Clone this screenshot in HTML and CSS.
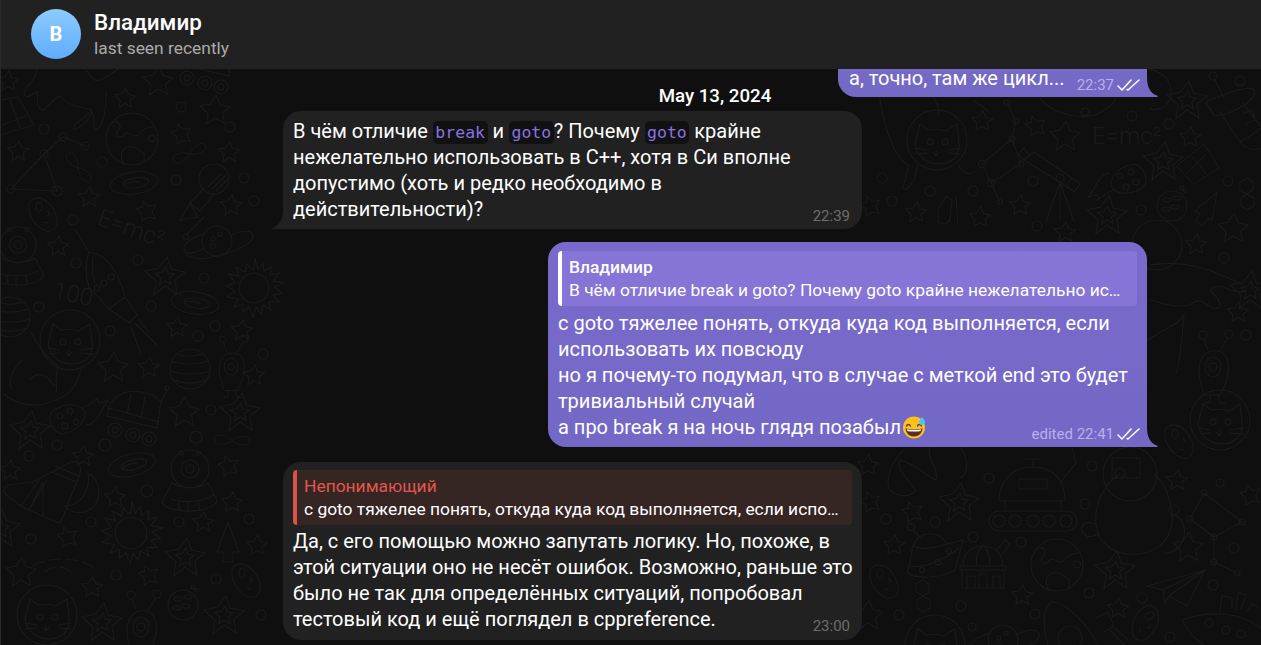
FILE: index.html
```html
<!DOCTYPE html>
<html>
<head>
    <title>Владимир</title>
    <link rel="stylesheet" href="styles.css">
</head>
<body>
    <svg class="icon-defs" width="0" height="0">
        <defs>
            <symbol id="checks" viewBox="0 0 24 14">
                <path d="M1 8l4 4L14 2M10 11.500l1 .5L22 2" fill="none" stroke="currentColor" stroke-width="1.500" stroke-linecap="round" stroke-linejoin="round"/>
            </symbol>

            <path id="d-star" d="M1-10 3.500-3.500 10.500-2 5 2 6.500 9 0 5.500-6 9.500-5 2.500-10.500-3-3.500-4Z"/>
            <path id="d-star-b" d="M-3-10 2-4.500 9.500-6 6 .5 9 7.500 2 6-4 10-4 3-10-2-3.500-4Z"/>
            <path id="d-star-m" d="M1-15 5-5.500 15-3 7.500 3 9.500 13.500 0 8-8.500 14-7 3.500-15-4-5-6Z"/>
            <g id="d-star2">
                <path d="M2-19 6.500-7 20-4 10 4 12 18 0 10-11 19-9 5-20-5-6.500-8Z"/>
                <path d="M1-9 3-3 9-2 4.500 2 6 8.500 0 5-5.500 9-4 2-9.500-2.500-3-3.500Z"/>
            </g>
            <g id="d-earth">
                <circle r="26"/>
                <path d="M-22-14C-16-22-8-14-14-8-20-2-10 0-8-4-4-10 0 0 6-4 10-10 16-12 22-12M-8 26C-12 18-12 10-4 8 4 6 6 12 12 14L12 24M20-4A3.500 3.500 0 1 0 20.100-4"/>
            </g>
            <g id="d-saturn">
                <circle r="15"/>
                <path d="M-13 7C-28 16-36 12-32 4-30 0-22-4-14-7M14-6C24-10 34-12 36-6 38 2 18 10 4 14-10 18-26 20-32 12"/>
                <circle cx="-4" cy="-2" r="2"/><circle cx="3" cy="-7" r="2"/><circle cx="-4" cy="5" r="2.500"/>
            </g>
            <g id="d-galaxy">
                <ellipse rx="24" ry="11"/>
                <ellipse cx="2" rx="13" ry="5"/>
                <path d="M-10 1C-6-2 2-2 6 0"/>
            </g>
            <path id="d-infinity" d="M0 0C-8-9-22-10-22-2-22 6-9 5 0 0 8-7 22-8 22 0 22 7 8 6 0 0Z"/>
            <g id="d-sun">
                <circle r="15"/>
                <path d="M0-19 1-30 4-19 9-25 10-17 17-21 16-13 25-15 19-7 30-5 20-1 28 5 19 7 25 14 15 14 17 22 9 17 7 26 2 19-1 29-5 19-11 24-11 16-20 19-16 11-27 9-19 3-28-2-19-5-25-14-15-12-18-21-9-16-7-24-3-19Z"/>
            </g>
            <g id="d-rover">
                <path d="M-26-16C-16-36 14-34 26-20L22 6-28-6Z"/>
                <path d="M-26-14 24 0M-4-28-8-8M10-26 6-4M26-20 32-32"/>
                <circle cx="32" cy="-34" r="2"/>
                <circle cx="-20" cy="8" r="7"/><circle cx="-2" cy="13" r="7"/><circle cx="14" cy="17" r="7"/>
                <circle cx="-20" cy="8" r="3"/><circle cx="-2" cy="13" r="3"/><circle cx="14" cy="17" r="3"/>
            </g>
            <g id="d-comet">
                <path d="M-12 14C-24 10-28-4-20-10-8-18 4-16 10-10 14-2 4 12-12 14Z"/>
                <circle cx="-14" cy="-4" r="3"/><circle cx="-4" cy="-9" r="3"/><circle cx="-9" cy="6" r="3"/><circle cx="2" cy="2" r="2.500"/>
                <path d="M8-12C16-14 18-18 24-22 22-16 28-16 34-20 30-12 24-6 26-6 20 2 16 6 12 4"/>
            </g>
            <g id="d-telescope">
                <path d="M-36-18-26-26 12 0 6 8ZM12 0 20 6 14 14 6 8M-30-22-36-30-42-24-36-18"/>
                <circle r="4"/>
                <path d="M0 4-14 44M0 4 0 44M0 4 14 44"/>
            </g>
            <g id="d-flashlight">
                <circle cx="14" cy="-12" r="15"/>
                <path d="M4-3-10 12 0 20 14 3M-10 12-20 30M-10 12-2 26-16 28-20 30M4 26-14 44"/>
                <path d="M8-4 22-18M12-2 26-16M16 0 28-12"/>
                <circle cx="-14" cy="46" r="3"/>
            </g>
            <path id="d-moon" d="M6-21C22-12 20 14 2 18-6 20-13 17-17 12-4 12 9 0 6-21Z"/>
            <g id="d-shuttle">
                <path d="M38-30C46-32 50-24 46-16L28 30C24 32 14 26 10 24L-4 18-12 14-28 2C-32-4-26-8-16-8L0-10Z"/>
                <path d="M6-12-12 14M14-12-4 18 10-10 10 24M18-20 44-10M22-26 46-16"/>
            </g>
            <g id="d-ufo">
                <circle cy="-18" r="19"/><circle cy="-18" r="9"/><circle cy="-18" r="4"/>
                <circle cx="-9" cy="-34" r="2"/><circle cx="9" cy="-34" r="2"/>
                <path d="M-18-4C-8 2 8 2 18-4L24 8C30 14 26 18 16 22 2 26-20 24-26 18-30 14-24 8-18-4ZM-20 12C-8 16 10 16 24 8M-12 14-10 24M-2 15-2 26M8 14 10 24"/>
            </g>
            <g id="d-saucer">
                <path d="M-26 20C-18 28 8 26 22 18L30-12 14-8C6-22-14-22-20-6-22 2-22 10-26 20Z"/>
                <path d="M-24 14C-10 16 8 10 26-4M-20-6C-12-2 2-4 14-8"/>
                <circle cx="-11" cy="18" r="2.500"/><circle cx="5" cy="10" r="3"/><circle cx="16" cy="-1" r="2.500"/>
                <path d="M-14-16-20-22"/><circle cx="-22" cy="-25" r="3.500"/>
            </g>
            <g id="d-alien">
                <path d="M-2-14C-16-12-16 6-14 14-12 24-10 30-8 30H6C8 26 14 16 14 6 16-6 10-16-2-14ZM-6-15-10-26M6-15 14-27"/>
                <circle cx="-11" cy="-30" r="4"/><circle cx="15" cy="-31" r="4"/>
                <ellipse cx="-1" cy="2" rx="8" ry="10"/><circle cx="-1" cy="2" r="4"/>
                <path d="M-4 30-4 37-10 38M4 30 6 38 12 38"/>
            </g>
            <g id="d-rocket">
                <path d="M-16-22C-2-24 14-4 20 22L4 34-16 12C-20 0-20-14-16-22Z"/>
                <path d="M4 34 24 48 32 40 20 22M-12-18C-14-6-12 2-10 8M-16-22-30-46"/>
                <circle cx="6" cy="2" r="3"/><circle cx="-1" cy="8" r="3"/><circle cx="-8" cy="13" r="3"/>
                <path d="M30 48 52 70M26 52 36 80M34 44 44 58"/>
            </g>
            <g id="d-egg">
                <path d="M-11-14C-2-18 8-10 12 2 16 12 10 20 2 18-8 14-16 4-15-8-15-12-13-13-11-14Z"/>
                <ellipse cx="-5" cy="-6" rx="3" ry="5"/><path d="M3-2 6 1 3 3M0 9 4 10"/>
            </g>
            <path id="d-arrow" d="M0-20 11 10H5V20H-5V10H-11Z"/>
            <g id="d-cat">
                <circle r="30"/>
                <path d="M-17-16-22 4C-20 18-8 24 2 24 14 24 24 16 22 2L20-16 9-9C3-11-4-11-9-10ZM-4 12-1 16 2 12M-1 10-1 16M-22 8-10 10M-22 14-10 13M10 10 24 8M10 13 24 14"/>
                <circle cx="-7" cy="2" r="3"/><circle cx="8" cy="2" r="3"/>
            </g>
            <path id="d-cat-body" d="M-10 0C-26 10-36 30-34 50-32 72-12 82 8 80 32 78 44 60 42 40 40 20 32 6 24 0M-34 50C-46 46-52 52-46 60-40 66-32 60-32 60M42 40C54 44 60 60 48 74 42 80 34 80 34 78"/>
            <g id="d-planet-ring">
                <circle r="20"/>
                <path d="M-19-8C-8-4 8-4 19-8M-20 2C-8 6 8 6 20 2M-17 11C-6 15 6 15 17 11M-12-15C-4-12 4-12 12-15"/>
            </g>
            <g id="d-planet-spots">
                <circle r="15"/>
                <ellipse cx="-5" cy="-6" rx="4" ry="2"/><ellipse cx="5" cy="-8" rx="4" ry="2"/>
                <ellipse cx="-6" cy="3" rx="4" ry="2"/><ellipse cx="3" cy="1" rx="4" ry="2"/>
                <circle cx="10" cy="-18" r="2"/><circle cx="13" cy="-15" r="1.500"/>
            </g>
            <g id="d-tank">
                <path d="M-34 8C-34-12-20-26 0-26 20-26 32-14 32 8ZM-28 8V18M28 8V18M-14-14H14V-4H-14ZM0-26V-34M-8-34H8"/>
                <rect x="-44" y="18" width="88" height="20" rx="10"/>
                <circle cx="-34" cy="28" r="6"/><circle cx="-18" cy="28" r="6"/><circle cx="0" cy="28" r="6"/><circle cx="16" cy="28" r="6"/><circle cx="33" cy="28" r="6"/>
            </g>
            <g id="d-observatory">
                <path d="M-20 0C-20-14-10-20 0-20 10-20 20-14 20 0M-23 0H23V4H-23ZM-6 0C-8-10-4-18 0-20 4-18 8-10 6 0M14-16 22-26 27-22 19-12"/>
                <path d="M-21 4V22H21V4M-16 22V10H-8V22M-4 22V8H4V22M10 22V10H17V22"/>
            </g>
            <g id="d-plane">
                <path d="M-30-2 28-18 10 18-8 8-12 16-14 2ZM-14 2 28-18-8 8"/>
            </g>
            <g id="d-hex">
                <path d="M-7-14 0-18 6-14 6-6 0-2-7-6ZM-6 2 0-2 7 2 7 10 0 14-6 10Z"/>
            </g>
            <g id="d-kite">
                <path d="M-15-24-32 20 0 30 18-6ZM-22-2 8 10M-6-14-16 24"/>
            </g>
            <g id="d-dish">
                <path d="M-26-18C-6-26 16-36 22-30 26-22 4-6-18-4Z"/>
                <path d="M-26-18-18-4M-12-8 8 22 30 8 10-18M8 22C14 30 24 32 32 26L30 8M14 4 24 0 20-10 10-6"/>
                <path d="M-8-22-18-42"/><circle cx="-19" cy="-44" r="4"/>
            </g>
        </defs>
    </svg>

    <header class="topbar">
        <div class="avatar">В</div>
        <div class="peer">
            <div class="peer-name">Владимир</div>
            <div class="peer-status">last seen recently</div>
        </div>
    </header>

    <main class="chat">
        <!-- wallpaper doodles, drawn on their own canvas behind the messages -->
        <svg class="wallpaper" width="1261" height="576" viewBox="0 69 1261 576" fill="none" stroke="#1b1b1b" stroke-width="1.100" aria-hidden="true">
            <!-- left column -->
            <use href="#d-star" x="8" y="81"/>
            <use href="#d-star" x="125" y="98"/>
            <use href="#d-star-m" x="158" y="81"/>
            <use href="#d-rover" x="207" y="70"/>
            <use href="#d-star-m" x="215" y="110"/>
            <path d="M37 69C35 85 23 86 24 94 26 100 32 94 37 92 38 100 36 110 44 110 48 106 52 100 60 96M85 69C92 76 92 82 100 80 108 76 112 74 118 69M60 96C68 106 84 108 92 110 84 120 70 124 74 130 84 126 90 118 92 112 96 120 92 130 96 130 104 126 106 110 106 92"/>
            <path d="M0 100 18 97 34 125 0 135ZM2 125 26 116M10 100 20 128"/>
            <path d="M85 146 63 137 44 154 11 189 57 191 44 154"/>
            <circle cx="63" cy="137" r="4"/><circle cx="85" cy="146" r="4"/><circle cx="44" cy="154" r="4"/><circle cx="11" cy="189" r="4"/><circle cx="57" cy="191" r="5"/>
            <use href="#d-earth" x="132" y="139"/>
            <use href="#d-star" x="18" y="151"/>
            <use href="#d-star-b" x="181" y="134"/>
            <use href="#d-infinity" transform="translate(190 154) rotate(-28) scale(.8)"/>
            <use href="#d-star" x="229" y="152"/>
            <use href="#d-infinity" transform="translate(78 168) rotate(48) scale(.8)"/>
            <use href="#d-galaxy" transform="translate(134 183) rotate(-8)"/>
            <use href="#d-flashlight" x="200" y="191"/>
            <use href="#d-star" x="89" y="197"/>
            <use href="#d-star-b" x="146" y="211"/>
            <use href="#d-star" x="231" y="205"/>
            <use href="#d-egg" x="44" y="213"/>
            <text class="doodle-text" transform="translate(96 224) rotate(20)">E=mc²</text>
            <use href="#d-ufo" transform="translate(18 262) scale(.95)"/>
            <use href="#d-star" x="58" y="246"/>
            <use href="#d-saturn" x="217" y="241"/>
            <use href="#d-rocket" x="105" y="275"/>
            <use href="#d-star2" x="165" y="276"/>
            <use href="#d-sun" x="254" y="288"/>
            <text class="doodle-text" transform="translate(52 298) rotate(12)">100</text>
            <use href="#d-galaxy" transform="translate(195 303) rotate(8)"/>
            <use href="#d-planet-ring" x="10" y="317"/>
            <use href="#d-cat" x="70" y="340"/>
            <path d="M30 331C38 345 44 355 58 366 54 380 58 390 56 392M82 366C78 390 64 400 40 405 20 406 12 400 4 394M22 360C12 370 8 380 12 390M30 380C36 372 46 372 54 386"/>
            <use href="#d-star" x="177" y="327"/>
            <use href="#d-star" x="242" y="330"/>
            <use href="#d-star-m" x="113" y="367"/>
            <use href="#d-star" x="149" y="367"/>
            <use href="#d-planet-ring" x="190" y="369"/>
            <use href="#d-alien" transform="translate(232 365) scale(.85)"/>
            <use href="#d-star" x="254" y="375"/>
            <use href="#d-star2" x="30" y="430"/>
            <use href="#d-comet" x="74" y="420"/>
            <use href="#d-rover" x="135" y="422"/>
            <use href="#d-star-m" x="184" y="412"/>
            <use href="#d-star2" x="240" y="412"/>
            <use href="#d-infinity" transform="translate(232 441) scale(.8)"/>
            <use href="#d-star" x="83" y="456"/>
            <use href="#d-star" x="10" y="470"/>
            <use href="#d-galaxy" transform="translate(132 465) rotate(-14)"/>
            <use href="#d-star-b" x="228" y="466"/>
            <use href="#d-ufo" x="190" y="487"/>
            <use href="#d-shuttle" x="33" y="492"/>
            <use href="#d-moon" x="82" y="494"/>
            <use href="#d-star" x="115" y="497"/>
            <use href="#d-star" x="232" y="502"/>
            <use href="#d-sun" transform="translate(131 533) scale(1.050)"/>
            <use href="#d-star" x="203" y="522"/>
            <use href="#d-star-b" x="67" y="537"/>
            <use href="#d-star2" x="0" y="528"/>
            <use href="#d-arrow" x="228" y="542"/>
            <use href="#d-star" x="257" y="545"/>
            <use href="#d-star2" x="185" y="557"/>
            <use href="#d-star-m" x="21" y="572"/>
            <path d="M32 566C50 556 80 556 98 570M44 572C56 564 66 566 74 575" stroke-dasharray="14 3"/>
            <use href="#d-star-b" x="148" y="575"/>
            <use href="#d-star" x="92" y="587"/>
            <use href="#d-egg" x="247" y="579"/>
            <use href="#d-planet-spots" x="183" y="605"/>
            <use href="#d-cat" x="47" y="615"/>
            <use href="#d-star2" x="102" y="622"/>
            <use href="#d-alien" x="142" y="625"/>
            <use href="#d-star2" x="224" y="615"/>

            <!-- right column -->
            <path d="M1148 69C1166 72 1174 84 1170 100 1166 108 1154 112 1150 108"/>
            <use href="#d-star2" x="1187" y="100"/>
            <use href="#d-dish" x="1232" y="120"/>
            <use href="#d-star" x="1190" y="137"/>
            <use href="#d-kite" transform="translate(1205 165) rotate(30) scale(.75)"/>
            <use href="#d-star2" x="1163" y="161"/>
            <use href="#d-hex" x="1247" y="196"/>
            <use href="#d-planet-spots" x="1172" y="206"/>
            <use href="#d-arrow" transform="translate(1208 208) rotate(30) scale(.9)"/>
            <use href="#d-star-m" x="1233" y="228"/>
            <use href="#d-star" x="1196" y="244"/>
            <circle cx="1157" cy="245" r="25"/>
            <path d="M1150 265C1180 260 1208 268 1228 278 1250 286 1252 296 1230 290 1222 286 1216 284 1210 290 1220 300 1226 310 1212 308 1205 304 1200 296 1190 305 1170 308 1160 302 1150 300"/>
            <use href="#d-star" x="1238" y="312"/>
            <use href="#d-alien" x="1214" y="365"/>
            <path d="M1148 340C1170 325 1178 325 1184 315 1182 340 1180 360 1176 375"/>
            <use href="#d-cat" x="1220" y="420"/>
            <use href="#d-star2" x="1250" y="290"/>
            <use href="#d-egg" x="1180" y="440"/>
            <use href="#d-star" x="868" y="465"/>
            <path d="M903 450C890 465 885 480 890 490 900 500 915 495 915 490 910 480 895 470 900 460 912 462 925 475 936 480 940 470 925 455 930 447M960 447C970 460 968 475 960 478"/>
            <use href="#d-star-b" x="870" y="502"/>
            <use href="#d-star-b" x="912" y="512"/>
            <use href="#d-star2" x="959" y="502"/>
            <use href="#d-tank" x="1033" y="493"/>
            <path d="M1072 448 1076 463 1060 483"/>
            <use href="#d-cat-body" x="1130" y="474"/>
            <circle cx="1130" cy="474" r="27"/>
            <path d="M1112 458H1140V478H1112ZM1120 468A5 5 0 1 0 1120.100 468"/>
            <use href="#d-star" x="1177" y="480"/>
            <use href="#d-star-b" x="1250" y="495"/>
            <path d="M1204 493 1242 522 1214 537 1190 519ZM1214 537V562L1237 573"/>
            <circle cx="1204" cy="493" r="3"/><circle cx="1242" cy="522" r="3"/><circle cx="1214" cy="537" r="3"/><circle cx="1190" cy="519" r="3"/><circle cx="1214" cy="562" r="3"/><circle cx="1237" cy="573" r="3"/>
            <use href="#d-star" x="894" y="545"/>
            <use href="#d-saucer" x="933" y="552"/>
            <use href="#d-observatory" x="983" y="566"/>
            <use href="#d-earth" x="1057" y="565"/>
            <use href="#d-star2" x="1115" y="570"/>
            <use href="#d-star-m" x="1188" y="547"/>
            <use href="#d-plane" x="1177" y="588"/>
            <use href="#d-egg" x="885" y="580"/>
            <use href="#d-hex" x="923" y="598"/>
            <use href="#d-star" x="1022" y="595"/>
            <use href="#d-star" x="1118" y="608"/>
            <use href="#d-star-m" x="868" y="615"/>
            <path d="M1048 645C1040 620 1046 600 1054 602 1070 606 1088 625 1098 645M1096 618 1108 612 1114 626 1104 632M1110 630 1124 645M1115 628 1128 640"/>
            <circle cx="1070" cy="638" r="12"/>
            <use href="#d-egg" transform="translate(1147 623) rotate(60)"/>
            <path d="M1182 620C1210 610 1240 612 1261 628M1182 620C1190 635 1196 640 1204 645M1220 612 1222 596 1232 598 1232 608M1236 610 1238 592 1246 595 1240 610M1246 612 1252 604 1258 608"/>
            <circle cx="1209" cy="623" r="4"/><circle cx="1226" cy="630" r="4"/><circle cx="1241" cy="634" r="4"/>
            <use href="#d-cat" x="935" y="645"/>
            <use href="#d-saturn" x="1003" y="640"/>

            <!-- top middle, above the purple bubble -->
            <use href="#d-cat" x="937" y="140"/>
            <path d="M880 69C875 100 890 155 908 165 908 180 898 190 906 190 918 180 915 170 918 165M958 165C965 175 970 175 975 172M932 95C935 100 940 105 938 115M973 100C980 105 985 108 988 112"/>
            <path d="M1007 103 1016 121 1012 139 982 164 991 183 1021 164 1012 139M991 183 1000 202"/>
            <circle cx="1007" cy="103" r="3"/><circle cx="1016" cy="121" r="3"/><circle cx="1012" cy="139" r="3"/><circle cx="982" cy="164" r="3.500"/><circle cx="1021" cy="164" r="3"/><circle cx="991" cy="183" r="3.500"/><circle cx="1000" cy="202" r="2.500"/>
            <use href="#d-star" x="982" y="121"/>
            <use href="#d-star-b" x="1035" y="126"/>
            <use href="#d-star-m" x="1065" y="136"/>
            <text class="doodle-text" x="1092" y="144">E=mc²</text>
            <use href="#d-telescope" x="1060" y="178"/>
            <use href="#d-comet" transform="translate(1122 178) rotate(180)"/>
            <path d="M1040 98C1050 112 1075 120 1095 115 1110 108 1115 102 1115 98M1085 108A4 4 0 1 0 1085.100 108"/>
            <use href="#d-star-b" x="870" y="206"/>
            <use href="#d-star" x="916" y="212"/>
            <path d="M938 210 946 196 952 200 950 220 946 224 938 222ZM956 196 958 225"/>
            <use href="#d-star" x="980" y="217"/>
            <use href="#d-star" x="1020" y="205"/>
            <use href="#d-star2" x="1107" y="215"/>
            <use href="#d-star" x="1065" y="232"/>

            <g fill="none">
                <circle cx="181" cy="107" r="5"/><circle cx="230" cy="127" r="5"/><circle cx="44" cy="129" r="5"/>
                <circle cx="102" cy="162" r="5"/><circle cx="176" cy="180" r="5"/><circle cx="244" cy="178" r="5"/>
                <circle cx="254" cy="201" r="5"/><circle cx="73" cy="220" r="5"/><circle cx="76" cy="263" r="5"/>
                <circle cx="138" cy="260" r="5"/><circle cx="204" cy="278" r="5"/><circle cx="39" cy="307" r="5"/>
                <circle cx="151" cy="306" r="5"/><circle cx="215" cy="326" r="5"/><circle cx="198" cy="336" r="5"/>
                <circle cx="110" cy="331" r="5"/><circle cx="263" cy="354" r="5"/>
                <circle cx="211" cy="410" r="5"/><circle cx="57" cy="445" r="5"/><circle cx="105" cy="445" r="6"/>
                <circle cx="29" cy="456" r="5"/><circle cx="196" cy="437" r="6"/><circle cx="147" cy="491" r="6"/>
                <circle cx="91" cy="522" r="5"/><circle cx="179" cy="522" r="5"/><circle cx="249" cy="519" r="5"/>
                <circle cx="31" cy="539" r="5"/><circle cx="116" cy="575" r="5"/><circle cx="216" cy="579" r="5"/>
                <circle cx="261" cy="615" r="5"/>
                <circle cx="1240" cy="81" r="5"/><circle cx="1169" cy="124" r="5"/><circle cx="1228" cy="181" r="5"/>
                <circle cx="1224" cy="258" r="5"/><circle cx="1246" cy="335" r="5"/><circle cx="1132" cy="116" r="5"/>
                <circle cx="882" cy="178" r="5"/><circle cx="930" cy="191" r="5"/><circle cx="973" cy="191" r="5"/>
                <circle cx="892" cy="201" r="5"/><circle cx="1033" cy="181" r="5"/><circle cx="1141" cy="210" r="5"/>
                <circle cx="1037" cy="226" r="5"/><circle cx="989" cy="478" r="5"/><circle cx="886" cy="519" r="5"/>
                <circle cx="935" cy="522" r="5"/><circle cx="973" cy="537" r="5"/><circle cx="1021" cy="542" r="5"/>
                <circle cx="1085" cy="504" r="5"/><circle cx="1092" cy="466" r="5"/><circle cx="1174" cy="510" r="5"/>
                <circle cx="1220" cy="483" r="4"/><circle cx="1234" cy="548" r="5"/><circle cx="1213" cy="585" r="5"/>
                <circle cx="1089" cy="593" r="5"/><circle cx="1142" cy="598" r="5"/><circle cx="1170" cy="637" r="5"/>
                <circle cx="1035" cy="614" r="5"/><circle cx="961" cy="606" r="5"/><circle cx="899" cy="615" r="5"/>
                <circle cx="972" cy="627" r="4"/>
            </g>
        </svg>

        <div class="messages">
            <div class="bubble out first-row">
                <div class="text">а, точно, там же цикл...<span class="meta"><span>22:37</span><svg class="checks"><use href="#checks"/></svg></span></div>
                <svg class="tail tail-out" width="11" height="20" viewBox="0 0 11 20"><path d="M0 0C0 10 3 16 10 18.500 11 19 11 20 10 20H0Z"/></svg>
            </div>

            <div class="date">May 13, 2024</div>

            <div class="bubble in wide">
                <div class="text">В чём отличие <code>break</code> и <code>goto</code>? Почему <code>goto</code> крайне нежелательно использовать в C++, хотя в Си вполне допустимо (хоть и редко необходимо в действительности)?<span class="meta"><span>22:39</span></span></div>
                <svg class="tail tail-in" width="11" height="20" viewBox="0 0 11 20"><path d="M11 0C11 10 8 16 1 18.500 0 19 0 20 1 20H11Z"/></svg>
            </div>

            <div class="bubble out big">
                <div class="reply">
                    <div class="reply-name">Владимир</div>
                    <div class="reply-text">В чём отличие break и goto? Почему goto крайне нежелательно использовать в C++, хотя в Си</div>
                </div>
                <div class="text">с goto тяжелее понять, откуда куда код выполняется, если использовать их повсюду<br>но я почему-то подумал, что в случае с меткой end это будет тривиальный случай<br>а про break я на ночь глядя позабыл<svg class="emoji" width="24" height="24" viewBox="0 0 24 24">
                    <circle cx="12" cy="12.500" r="11" fill="#fcc21b"/>
                    <path d="M4.500 11c.5-2 3-2 4 0M15.500 11c.5-2 3-2 4 0" fill="none" stroke="#5d4037" stroke-width="1.400" stroke-linecap="round"/>
                    <path d="M3.500 13.500c3 1 14 1 17 0-.5 5-4 8-8.500 8s-8-3-8.500-8Z" fill="#5d2f1e"/>
                    <path d="M5 14.200c3 .7 11 .7 14 0l-.3 1.800c-3 .7-10.400.7-13.400 0Z" fill="#fff"/>
                    <path d="M20 2c1.500 2 3 3.500 3 5a3 3 0 0 1-6 0c0-1.500 1.500-3 3-5Z" fill="#4fc3f7"/>
                </svg><span class="meta"><span>edited 22:41</span><svg class="checks"><use href="#checks"/></svg></span></div>
                <svg class="tail tail-out" width="11" height="20" viewBox="0 0 11 20"><path d="M0 0C0 10 3 16 10 18.500 11 19 11 20 10 20H0Z"/></svg>
            </div>

            <div class="bubble in wide last">
                <div class="reply reply-red">
                    <div class="reply-name">Непонимающий</div>
                    <div class="reply-text">с goto тяжелее понять, откуда куда код выполняется, если использовать их повсюду но я</div>
                </div>
                <div class="text">Да, с его помощью можно запутать логику. Но, похоже, в этой ситуации оно не несёт ошибок. Возможно, раньше это было не так для определённых ситуаций, попробовал тестовый код и ещё поглядел в cppreference.<span class="meta"><span>23:00</span></span></div>
            </div>
        </div>
    </main>
</body>
</html>
```
FILE: styles.css
```css
html, body {
    margin: 0;
    padding: 0;
    height: 100%;
    overflow: hidden;
}
body {
    display: flex;
    flex-direction: column;
    background-color: #0f0f0f;
    color: #fff;
    font-family: Roboto, "Noto Sans", sans-serif;
    border-left: 1px solid #2a2a2a;
    box-sizing: border-box;
}
.icon-defs {
    position: absolute;
}

/* Top bar */
.topbar {
    flex: none;
    height: 69px;
    box-sizing: border-box;
    padding-left: 30px;
    display: flex;
    align-items: center;
    gap: 13px;
    background-color: #212121;
}
.avatar {
    width: 50px;
    height: 50px;
    margin-top: -1px;
    border-radius: 50%;
    background: linear-gradient(#8ccbff, #5eadff);
    display: flex;
    align-items: center;
    justify-content: center;
    font-size: 20px;
    font-weight: 700;
}
.peer {
    margin-top: 1px;
}
.peer-name {
    font-size: 22.4px;
    font-weight: 500;
    line-height: 25px;
}
.peer-status {
    font-size: 17.4px;
    line-height: 25px;
    margin-top: 1px;
    color: #aaa;
}

/* Message column */
.chat {
    flex: 1;
    min-height: 0;
    position: relative;
    overflow: hidden;
    display: flex;
    flex-direction: column;
    justify-content: flex-end;
}
.wallpaper {
    position: absolute;
    left: -1px;
    top: 0;
}
.doodle-text {
    fill: #1b1b1b;
    stroke: none;
    font-size: 24px;
    font-weight: 300;
}
.messages {
    position: relative;
    width: 864px;
    margin-left: 282px;
    padding-bottom: 5px;
    display: flex;
    flex-direction: column;
    flex: none;
}
.date {
    text-align: center;
    font-size: 18.7px;
    font-weight: 500;
    line-height: 18px;
    height: 24px;
    margin-top: -10px;
}

.bubble {
    position: relative;
    box-sizing: border-box;
    border-radius: 18px;
    padding: 7px 10px;
    font-size: 20px;
    line-height: 26px;
}
.bubble.in {
    align-self: flex-start;
    background-color: #212121;
    border-bottom-left-radius: 0;
}
/* Incoming text runs a little wider than its quote box. */
.bubble.in .text {
    margin-right: -2px;
}
.bubble.out {
    align-self: flex-end;
    background: linear-gradient(#7a6acb, #7368c6);
    border-bottom-right-radius: 0;
}
.bubble.last {
    border-bottom-left-radius: 18px;
    margin-top: 15px;
    padding-top: 8px;
    padding-bottom: 8px;
}
.wide {
    width: 579px;
}
.big {
    width: 599px;
    margin-top: 13px;
    padding-top: 9px;
}
.bubble.first-row {
    width: 309px;
    padding: 26px 10px 6px 11px;
    background: #7469c5;
}
.text {
    position: relative;
}
.reply + .text {
    margin-top: 4px;
}
.last .reply + .text {
    margin-top: 3px;
}
code {
    font-family: "DejaVu Sans Mono", "Liberation Mono", monospace;
    font-size: 16.5px;
    line-height: 1;
    color: #8774e1;
    background-color: #111;
    border-radius: 5px;
    padding: 2px 2.500px;
}
.meta {
    float: right;
    display: inline-flex;
    align-items: center;
    gap: 3px;
    font-size: 15px;
    line-height: 18px;
    margin: 11px 4px -6px 10px;
    color: #6d6d6d;
}
.out .meta {
    color: #b9b0ea;
    margin-right: -4px;
}
.checks {
    width: 24px;
    height: 14px;
    color: #fff;
}
.emoji {
    vertical-align: -5px;
    margin-left: 1px;
}
.tail {
    position: absolute;
    bottom: 0;
}
.tail-out {
    left: 100%;
    fill: #7368c6;
}
.tail-in {
    right: 100%;
    fill: #212121;
}

/* Quoted message */
.reply {
    border-left: 4px solid #fff;
    border-radius: 4px;
    background-color: #8674d6;
    padding: 5px 8px 2px 7px;
    font-size: 17.4px;
    line-height: 23px;
    height: 55px;
    box-sizing: border-box;
}
.reply-name {
    font-weight: 500;
}
.reply-text {
    white-space: nowrap;
    overflow: hidden;
    text-overflow: ellipsis;
}
.reply-red {
    border-left-color: #d9534a;
    background-color: #352523;
}
.reply-red .reply-name {
    color: #e2574c;
    font-weight: 400;
}
```
